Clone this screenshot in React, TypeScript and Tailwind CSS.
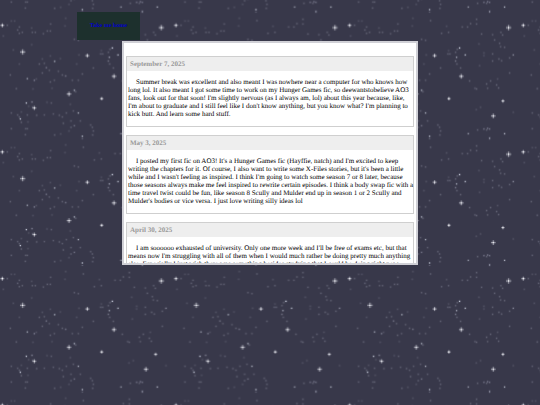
import { useId } from "react";

// star positions inside one 521x380 tile: [x, y, brightness]
const dots: [number, number, number][] = [
  [22, 41, 4], [34, 28, 3], [44, 28, 3], [58, 46, 4], [53, 55, 4], [58, 65, 4], [67, 62, 4], [10, 73, 3],
  [95, 49, 3], [97, 62, 4], [106, 62, 4], [130, 66, 4], [142, 58, 4], [151, 58, 4], [152, 37, 4], [197, 20, 3],
  [195, 43, 3], [250, 27, 4], [223, 83, 4], [235, 86, 4], [95, 99, 3], [40, 115, 3], [58, 157, 3], [127, 142, 3],
  [118, 157, 4], [133, 155, 4], [139, 168, 5], [148, 176, 4], [127, 184, 4], [151, 133, 3], [164, 149, 8], [181, 141, 3],
  [175, 179, 4], [187, 190, 4], [197, 193, 5], [31, 190, 4], [82, 201, 7], [103, 206, 6], [109, 202, 3], [151, 211, 4],
  [163, 206, 4], [217, 206, 4], [235, 206, 4], [247, 187, 4], [230, 157, 3], [237, 130, 3], [49, 231, 4], [99, 232, 3],
  [156, 230, 3], [223, 236, 8], [227, 240, 4], [79, 274, 9], [96, 271, 6], [86, 284, 3], [98, 286, 4], [141, 272, 3],
  [154, 274, 4], [211, 278, 3], [34, 304, 4], [64, 301, 3], [53, 310, 4], [58, 316, 4], [61, 322, 9], [64, 332, 4],
  [82, 310, 4], [84, 331, 3], [110, 311, 4], [133, 310, 4], [160, 307, 4], [178, 311, 4], [187, 316, 4], [199, 304, 4],
  [220, 298, 4], [235, 304, 8], [190, 335, 4], [213, 328, 4], [241, 328, 4], [223, 342, 5], [213, 347, 4], [207, 358, 3],
  [34, 351, 4], [77, 351, 4], [82, 351, 4], [76, 369, 4], [164, 370, 4], [182, 367, 3], [247, 374, 8], [272, 340, 4],
  [277, 347, 4], [280, 358, 4], [278, 370, 4], [283, 65, 4], [298, 44, 3], [304, 62, 4], [345, 46, 4], [361, 46, 4],
  [370, 36, 4], [388, 23, 4], [388, 37, 4], [403, 67, 4], [436, 69, 4], [442, 85, 4], [461, 62, 4], [466, 70, 4],
  [457, 95, 4], [460, 105, 4], [472, 107, 4], [395, 97, 3], [337, 109, 9], [330, 113, 4], [325, 122, 4], [328, 137, 7],
  [304, 117, 3], [302, 127, 4], [308, 127, 4], [354, 130, 8], [325, 148, 5], [329, 157, 4], [340, 169, 4], [280, 169, 4],
  [410, 124, 3], [410, 132, 3], [436, 127, 4], [436, 148, 4], [455, 142, 4], [463, 147, 4], [487, 139, 4], [498, 130, 6],
  [397, 162, 3], [487, 184, 4], [367, 208, 4], [418, 217, 4], [430, 208, 4], [451, 202, 3], [448, 220, 4], [421, 230, 4],
  [454, 229, 4], [383, 230, 4], [388, 232, 4], [387, 294, 3], [400, 287, 3], [498, 302, 3], [363, 366, 7], [391, 355, 4],
  [410, 352, 5], [418, 355, 4], [421, 350, 5], [427, 352, 5], [472, 366, 8], [427, 379, 6], [247, 0, 5], [427, 1, 6],
];

// bigger stars with four rays: [x, y, ray length]
const crosses: [number, number, number][] = [
  [7, 41, 6], [68, 121, 8], [262, 132, 6], [342, 194, 7], [207, 247, 7], [103, 289, 6],
  [484, 48, 8], [305, 261, 5], [467, 268, 5], [438, 313, 7],
];

const entries = [
  {
    date: "September 7, 2025",
    lines: [
      "Summer break was excellent and also meant I was nowhere near a computer for who knows how",
      "long lol. It also meant I got some time to work on my Hunger Games fic, so deewantstobelieve AO3",
      "fans, look out for that soon! I'm slightly nervous (as I always am, lol) about this year because, like,",
      "I'm about to graduate and I still feel like I don't know anything, but you know what? I'm planning to",
      "kick butt. And learn some hard stuff.",
    ],
  },
  {
    date: "May 3, 2025",
    lines: [
      "I posted my first fic on AO3! It's a Hunger Games fic (Hayffie, natch) and I'm excited to keep",
      "writing the chapters for it. Of course, I also want to write some X-Files stories, but it's been a little",
      "while and I wasn't feeling as inspired. I think I'm going to watch some season 7 or 8 later, because",
      "those seasons always make me feel inspired to rewrite certain episodes. I think a body swap fic with a",
      "time travel twist could be fun, like season 8 Scully and Mulder end up in season 1 or 2 Scully and",
      "Mulder's bodies or vice versa. I just love writing silly ideas lol",
    ],
  },
  {
    date: "April 30, 2025",
    lines: [
      "I am soooooo exhausted of university. Only one more week and I'll be free of exams etc, but that",
      "means now I'm struggling with all of them when I would much rather be doing pretty much anything",
      "else. Especially I just wish there was something besides studying that I could be doing right now",
    ],
  },
];

function Stars() {
  const id = useId();
  return (
    <svg className="absolute inset-0 -z-10 h-full w-full" aria-hidden="true">
      <defs>
        <pattern id={id} y="795" width="521" height="380" patternUnits="userSpaceOnUse" patternTransform="scale(0.3333)">
          {dots.map(([x, y, b], i) => (
            <g key={i} fill="#d8dcec">
              <circle cx={x} cy={y} r="4" opacity={b * 0.014} />
              <circle cx={x} cy={y} r="2" opacity={b * b * 0.012} />
            </g>
          ))}
          {crosses.map(([x, y, r], i) => (
            <g key={i} stroke="#e4e6f2" fill="#ffffff">
              <circle cx={x} cy={y} r={r} stroke="none" opacity="0.1" />
              <path d={`M${x - r} ${y}H${x + r}M${x} ${y - r}V${y + r}`} strokeWidth="2" opacity="0.8" />
              <circle cx={x} cy={y} r="2" stroke="none" />
            </g>
          ))}
        </pattern>
      </defs>
      <rect width="100%" height="100%" fill={`url(#${id})`} />
    </svg>
  );
}

function Entry(props: { date: string; lines: string[] }) {
  const { date, lines } = props;
  return (
    <article className="border border-[#cfcfcf]">
      <h2 className="bg-[#eeeeee] px-[3px] text-[7px] leading-[14px] font-bold text-[#999999]">{date}</h2>
      <p className="px-px pt-[7px] pb-2 indent-2 text-[7px] leading-2 whitespace-nowrap">
        {lines.map((line, i) => (
          <span key={i}>
            {i > 0 && <br />}
            {line}
          </span>
        ))}
      </p>
    </article>
  );
}

export default function App() {
  return (
    <div className="relative isolate flex min-h-screen flex-col bg-[#38384a] font-['Liberation_Serif',serif] text-black [text-rendering:geometricPrecision]">
      <Stars />
      <nav className="flex pt-3 pl-[77px]">
        <a href="#home" className="bg-[#1d302d] px-[13px] text-[6px] leading-7 font-bold text-[#0000c8]">
          Take me home
        </a>
      </nav>
      <main className="mx-auto mt-px flex h-56 w-full max-w-[296px] flex-col gap-2 overflow-hidden border-2 border-[#d0d0d6] bg-white px-[2px] pt-[13px]">
        {entries.map((entry) => (
          <Entry key={entry.date} date={entry.date} lines={entry.lines} />
        ))}
      </main>
    </div>
  );
}
